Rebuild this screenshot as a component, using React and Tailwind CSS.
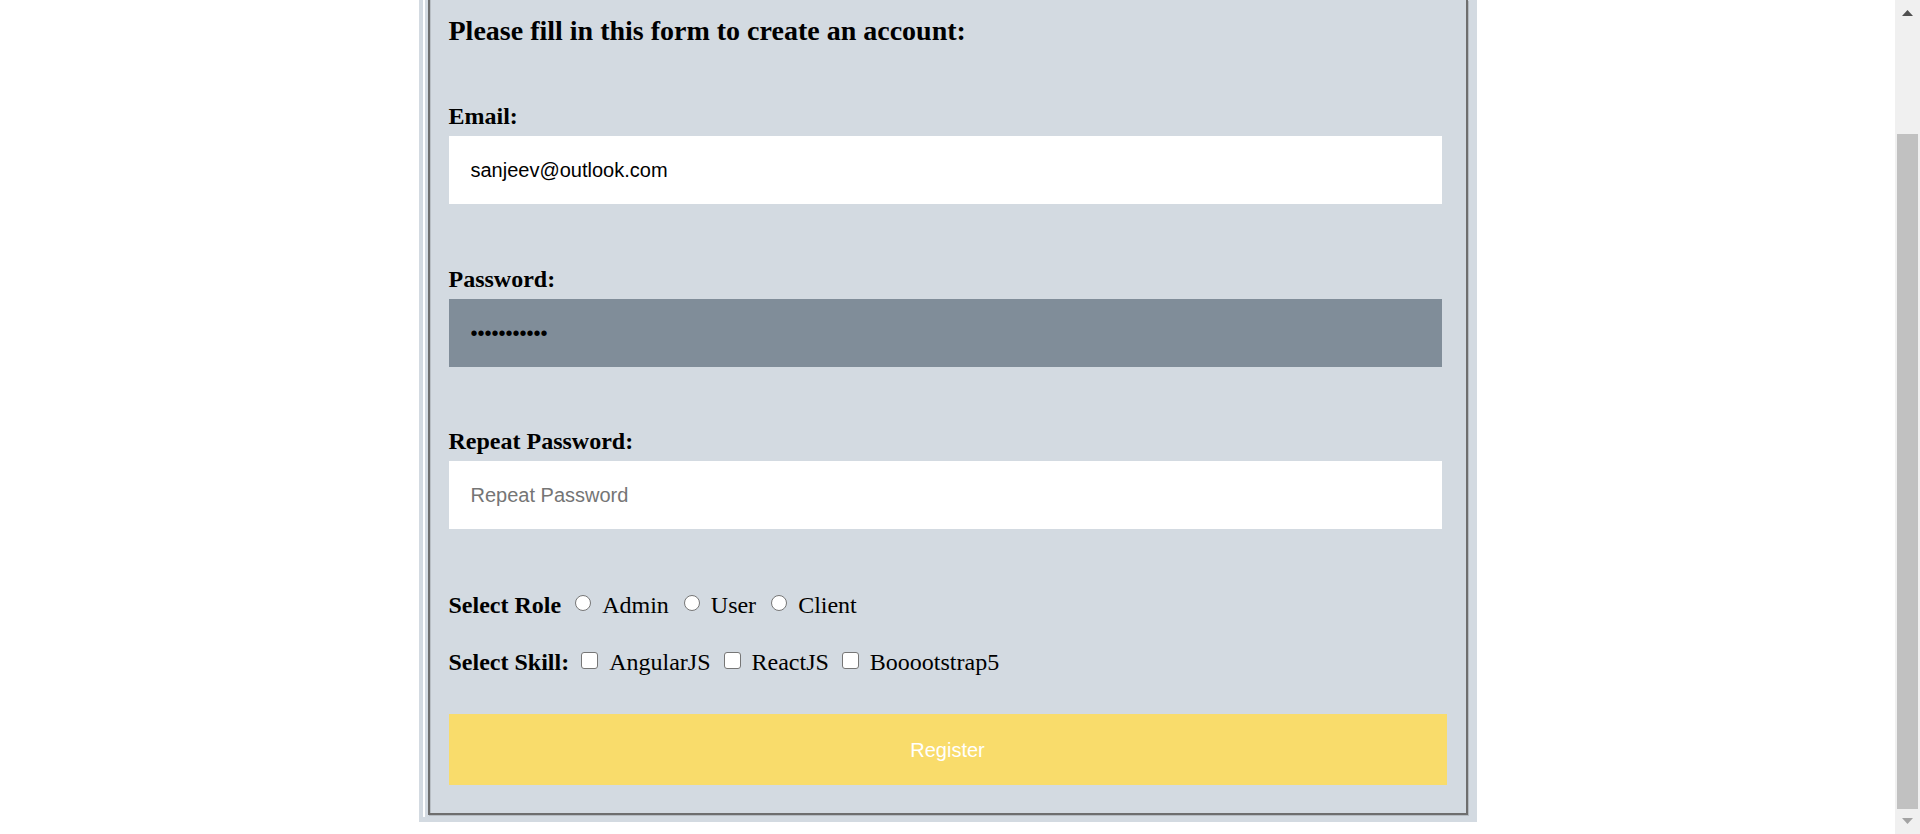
export default function App() {
  const serif = "font-['Liberation_Serif','Times_New_Roman',serif]";
  const radio =
    "mb-[4px] mr-[11px] h-[16px] w-[16px] shrink-0 appearance-none rounded-full border border-[#767676] bg-white";
  const check =
    "mb-[3px] mr-[11px] h-[17px] w-[17px] shrink-0 appearance-none rounded-[3px] border border-[#767676] bg-white";
  return (
    <div className={`flex h-[834px] w-[1920px] overflow-hidden bg-white text-black ${serif}`}>
      <div className="flex-1">
        <div className="mx-auto flex w-[1058px] bg-[#d3dae1] pb-[5px] pl-[4px] pr-[9px]">
          <div className="w-[2px] self-stretch bg-white" />
          <div className="mb-[2px] ml-[3px] w-[1040px] self-start border-x-2 border-b-2 border-[#6e6e6e] pb-[28px] pl-[19px] shadow-[inset_1px_0_0_#b9bfc5,1px_1px_0_#b5bbc1]">
            <div className="mt-[15px] text-[28px] font-bold leading-[32px]">
              Please fill in this form to create an account:
            </div>

            <div className="mt-[55px] text-[24px] font-bold leading-[28px]">Email:</div>
            <input
              type="text"
              readOnly
              value="sanjeev@outlook.com"
              className="mt-[6px] block h-[68px] w-[993px] border-0 bg-white px-[22px] font-['Liberation_Sans',Arial,sans-serif] text-[20px] text-black outline-none"
            />

            <div className="mt-[61px] text-[24px] font-bold leading-[28px]">Password:</div>
            <input
              type="password"
              readOnly
              value="12345678901"
              className="mt-[6px] block h-[68px] w-[993px] border-0 bg-[#808d99] px-[22px] font-['Liberation_Sans',Arial,sans-serif] text-[20px] text-black outline-none"
            />

            <div className="mt-[60px] text-[24px] font-bold leading-[28px]">Repeat Password:</div>
            <input
              type="password"
              readOnly
              placeholder="Repeat Password"
              className="mt-[6px] block h-[68px] w-[993px] border-0 bg-white px-[22px] font-['Liberation_Sans',Arial,sans-serif] text-[20px] text-black outline-none placeholder:text-[#757575]"
            />

            <div className="mt-[62px] flex h-[28px] items-center text-[24px] leading-[28px]">
              <span className="mr-[14px] font-bold">Select Role</span>
              <input type="radio" name="role" className={radio} />
              <span className="mr-[15px]">Admin</span>
              <input type="radio" name="role" className={radio} />
              <span className="mr-[15px]">User</span>
              <input type="radio" name="role" className={radio} />
              <span>Client</span>
            </div>

            <div className="mt-[29px] flex h-[28px] items-center text-[24px] leading-[28px]">
              <span className="mr-[12px] font-bold">Select Skill:</span>
              <input type="checkbox" className={check} />
              <span className="mr-[13px]">AngularJS</span>
              <input type="checkbox" className={check} />
              <span className="mr-[13px]">ReactJS</span>
              <input type="checkbox" className={check} />
              <span>Booootstrap5</span>
            </div>

            <button
              type="button"
              className="mt-[38px] block h-[71px] w-[998px] border-0 bg-[#f9dc6b] font-['Liberation_Sans',Arial,sans-serif] text-[20px] text-white"
            >
              Register
            </button>
          </div>
        </div>
      </div>

      <div className="flex w-[25px] flex-col bg-[#f0f0f0]">
        <div className="flex h-[25px] items-start justify-center pt-[10px]">
          <svg width="11" height="6" viewBox="0 0 11 6">
            <polygon points="5.5,0 11,6 0,6" fill="#505050" />
          </svg>
        </div>
        <div className="h-[109px]" />
        <div className="mx-[2px] h-[675px] bg-[#c1c1c1]" />
        <div className="flex h-[25px] items-start justify-center pt-[9px]">
          <svg width="11" height="6" viewBox="0 0 11 6">
            <polygon points="0,0 11,0 5.5,6" fill="#a3a3a3" />
          </svg>
        </div>
      </div>
    </div>
  );
}
